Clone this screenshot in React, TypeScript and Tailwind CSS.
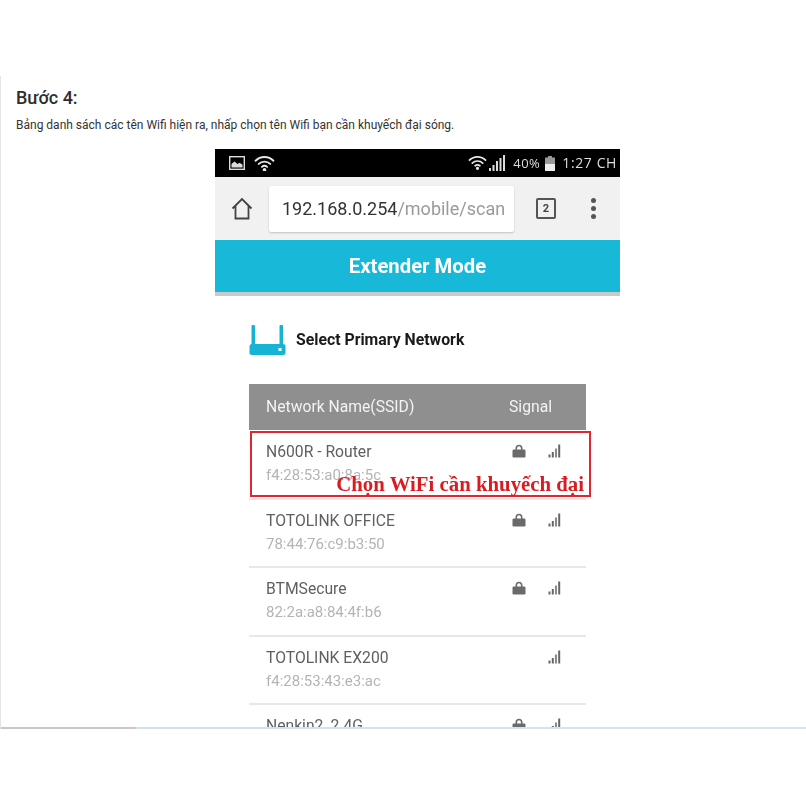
const rows = [
  { name: "N600R - Router", mac: "f4:28:53:a0:8a:5c", lock: true },
  { name: "TOTOLINK OFFICE", mac: "78:44:76:c9:b3:50", lock: true },
  { name: "BTMSecure", mac: "82:2a:a8:84:4f:b6", lock: true },
  { name: "TOTOLINK EX200", mac: "f4:28:53:43:e3:ac", lock: false },
  { name: "Nenkin2_2.4G", mac: "", lock: true },
];

function Lock() {
  return (
    <svg width="14" height="14" viewBox="0 0 14 14" fill="#6a6a6a">
      <path d="M3.5 6V4.2a3.5 3.5 0 0 1 7 0V6h-1.6V4.2a1.9 1.9 0 0 0-3.8 0V6z" />
      <rect x="0.5" y="5.5" width="13" height="8" rx="1.2" />
    </svg>
  );
}

function Bars() {
  return (
    <svg width="13" height="14" viewBox="0 0 13 14" fill="#666">
      <rect x="0.5" y="10.5" width="2" height="3" />
      <rect x="3.8" y="8" width="2" height="5.5" />
      <rect x="7" y="4.5" width="2" height="9" fill="#8a8a8a" />
      <rect x="10.2" y="0.5" width="2" height="13" />
    </svg>
  );
}

function WifiSmall({ w }: { w: number }) {
  return (
    <svg width={w} height={w * 0.8} viewBox="0 0 20 16" fill="none" stroke="#e8e8e8" strokeWidth="1.8" strokeLinecap="round">
      <path d="M1.5 5.5a12 12 0 0 1 17 0" />
      <path d="M4.5 8.5a8 8 0 0 1 11 0" />
      <path d="M7.5 11.3a4 4 0 0 1 5 0" />
      <circle cx="10" cy="14" r="0.8" fill="#e8e8e8" />
    </svg>
  );
}

export default function App() {
  return (
    <div className="w-[806px] h-[806px] bg-white overflow-hidden pt-[76px] font-['Roboto',sans-serif]">
      <div className="relative h-[653px] border-l border-[#e4e4e4] overflow-hidden">
        <h2 className="pl-[15px] pt-[12px] text-[18px] leading-[20px] font-medium text-[#2e2e2e]">Bước 4:</h2>
        <p className="pl-[15px] pt-[9px] text-[12px] leading-[16px] text-[#333]">
          Bảng danh sách các tên Wifi hiện ra, nhấp chọn tên Wifi bạn cần khuyếch đại sóng.
        </p>

        <div className="relative ml-[214px] mt-[16px] w-[405px] blur-[0.3px]">
          {/* status bar */}
          <div className="h-[28px] bg-black flex items-center pl-[14px] pr-[3px] text-[#dcdcdc]">
            <svg width="16" height="14" viewBox="0 0 16 14">
              <rect x="0.7" y="0.7" width="14.6" height="12.6" fill="none" stroke="#ddd" strokeWidth="1.4" />
              <path d="M2.5 11.5V8l3-2.5 3 2.5 2-1.2 3 2v2.7z" fill="#ddd" />
            </svg>
            <span className="ml-[9px] flex"><WifiSmall w={21} /></span>
            <span className="ml-auto flex"><WifiSmall w={19} /></span>
            <svg className="ml-[2px]" width="18" height="17" viewBox="0 0 18 17" fill="#ddd">
              <rect x="0" y="13" width="2" height="3" />
              <rect x="3.5" y="10" width="2" height="6" />
              <rect x="7" y="6" width="2" height="10" />
              <rect x="10.5" y="3" width="2" height="13" />
              <rect x="14" y="0" width="2" height="16" />
            </svg>
            <span className="ml-[6px] text-[13px] leading-none tracking-[0.5px] font-['Open_Sans',sans-serif]">40%</span>
            <svg className="ml-[5px]" width="10" height="15" viewBox="0 0 10 15">
              <rect x="3" y="0" width="4" height="2" fill="#999" />
              <rect x="0" y="1.5" width="10" height="6" fill="#999" />
              <rect x="0" y="7.5" width="10" height="7.5" fill="#eee" />
            </svg>
            <span className="ml-[7px] text-[14px] leading-none tracking-[0.6px] font-['Open_Sans',sans-serif]">1:27 CH</span>
          </div>

          {/* browser bar */}
          <div className="h-[63px] bg-[#f1f1f1] flex items-center pl-[16px]">
            <svg width="22" height="23" viewBox="0 0 22 23" fill="none" stroke="#444" strokeWidth="1.8">
              <path d="M1.5 11.5 11 2l9.5 9.5M4.5 9v12.5h13V9" strokeLinejoin="miter" />
            </svg>
            <div className="ml-[16px] w-[245px] h-[46px] bg-white rounded-[2px] shadow-[0_1px_2px_rgba(0,0,0,0.2)] flex items-center pl-[13px] text-[18px] whitespace-nowrap">
              <span className="text-[#333]">192.168.0.254</span>
              <span className="text-[#9a9a9a]">/mobile/scan</span>
            </div>
            <div className="ml-[22px] w-[20px] h-[21px] border-2 border-[#555] rounded-[2px] flex items-center justify-center text-[11px] font-bold text-[#444] leading-none">2</div>
            <div className="ml-[35px] flex flex-col gap-[3px]">
              <span className="w-[5px] h-[5px] rounded-full bg-[#555]" />
              <span className="w-[5px] h-[5px] rounded-full bg-[#555]" />
              <span className="w-[5px] h-[5px] rounded-full bg-[#555]" />
            </div>
          </div>

          {/* teal header */}
          <div className="h-[52px] bg-[#17b8d8] flex items-center justify-center text-white text-[20.3px] font-bold">
            Extender Mode
          </div>
          <div className="h-[4px] bg-[#c9c9c9]" />

          {/* body */}
          <div className="bg-white pl-[34px] pr-[34px] pt-[29px]">
            <div className="flex items-center h-[30px]">
              <svg width="37" height="30" viewBox="0 0 37 30" fill="#17b3d5">
                <rect x="2.5" y="0" width="3.5" height="22" rx="1" />
                <rect x="30.5" y="0" width="3.5" height="22" rx="1" />
                <rect x="0.5" y="19" width="36" height="11" rx="2.5" />
                <rect x="29.5" y="23" width="3" height="3" fill="#fff" />
              </svg>
              <span className="ml-[10px] text-[15.8px] font-bold text-[#1a1a1a]">Select Primary Network</span>
            </div>

            <div className="mt-[29px] h-[46px] bg-[#8f8f8f] flex items-center justify-between pl-[17px] pr-[34px] text-[15.7px] text-[#f3f3f3]">
              <span>Network Name(SSID)</span>
              <span>Signal</span>
            </div>

            <div className="pt-[1px]">
              {rows.map((r) => (
                <div key={r.name} className="relative h-[68.6px] border-b-2 border-[#e8e8e8] pl-[17px] pt-[11px]">
                  <div className="text-[15.7px] leading-[20px] text-[#5f5f5f]">{r.name}</div>
                  <div className="mt-[3px] text-[15px] leading-[20px] text-[#b4b4b4]">{r.mac}</div>
                  {r.lock && <div className="absolute left-[263px] top-[13px]"><Lock /></div>}
                  <div className="absolute left-[299px] top-[13px]"><Bars /></div>
                </div>
              ))}
            </div>

            <div className="absolute left-[35px] top-[282px] w-[341px] h-[66px] border-2 border-[#e0262f]">
              <span className="absolute right-[5px] bottom-[-1px] font-['Liberation_Serif',serif] font-bold text-[20.8px] leading-[24px] text-[#d91c22] whitespace-nowrap">
                Chọn WiFi cần khuyếch đại
              </span>
            </div>
          </div>
        </div>

        <div className="absolute left-0 right-0 bottom-0 h-[2px] bg-[linear-gradient(90deg,#c8c8c8_0,#c8c8c8_134px,#cfe3e8_135px,#d8e6ec_100%)]" />
      </div>
    </div>
  );
}
